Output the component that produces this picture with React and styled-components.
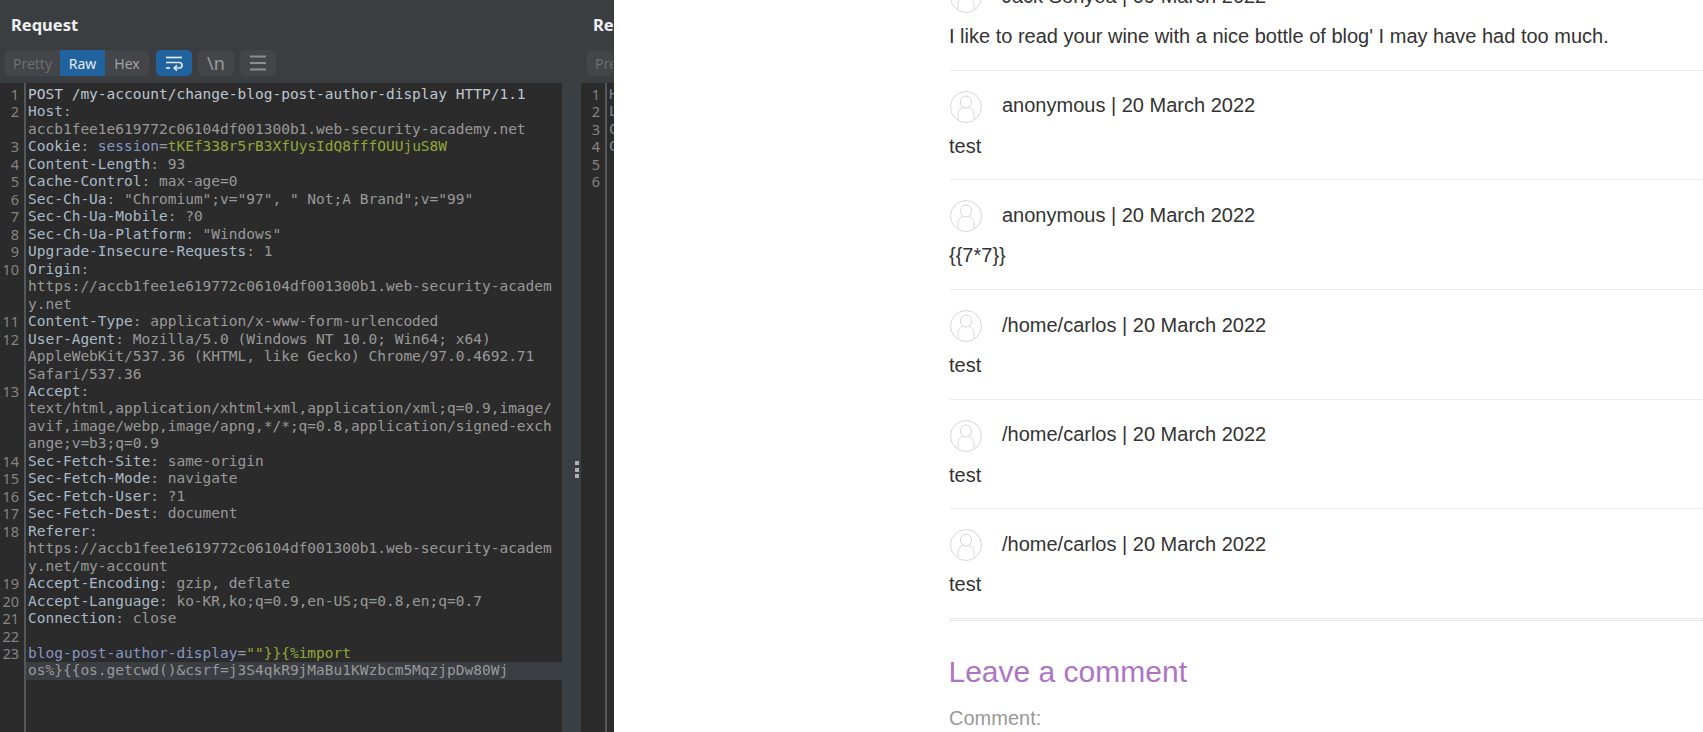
import React from "react";
import styled, { createGlobalStyle } from "styled-components";

const Global = createGlobalStyle`
  html, body {
    margin: 0;
    height: 732px;
    overflow: hidden;
    background: #fff;
  }
`;

const Page = styled.div`
  display: flex;
  width: 1703px;
  height: 732px;
  overflow: hidden;
`;

const Burp = styled.div`
  display: flex;
  flex: 0 0 614px;
  height: 732px;
  overflow: hidden;
  background: #3b3e41;
`;

const Pane = styled.div`
  display: flex;
  flex-direction: column;
  flex: 0 0 ${(p) => p.$width}px;
  min-width: 0;
  overflow: hidden;
`;

const PaneHeader = styled.div`
  height: 83px;
  flex: none;
  box-sizing: border-box;
  padding: 16px 0 0 ${(p) => p.$inset}px;
`;

const PaneTitle = styled.div`
  font: 700 16.5px/18px "Noto Sans", sans-serif;
  color: #eef0f2;
  margin: 0 0 16px ${(p) => p.$inset}px;
  white-space: nowrap;
`;

const Toolbar = styled.div`
  display: flex;
  gap: 6px;
  height: 26px;
`;

const Segments = styled.div`
  display: flex;
  border-radius: 5px;
  overflow: hidden;
  background: #434548;
  margin-right: 1px;
`;

const Segment = styled.div`
  width: ${(p) => p.$width}px;
  flex: none;
  display: flex;
  align-items: center;
  justify-content: center;
  font: 400 14px "Noto Sans", sans-serif;
  color: ${(p) => p.$color};
  background: ${(p) => (p.$active ? "#20639f" : "transparent")};
`;

const ToolButton = styled.div`
  width: 36px;
  height: 26px;
  flex: none;
  border-radius: 5px;
  display: flex;
  align-items: center;
  justify-content: center;
  font: 400 18px "Noto Sans", sans-serif;
  color: #9b9b9b;
  background: ${(p) => (p.$active ? "#20639f" : "#434548")};
`;

const PaneBody = styled.div`
  display: flex;
  flex: 1;
  min-height: 0;
`;

const Code = styled.div`
  flex: 1;
  min-width: 0;
  background: #2b2b2b;
  position: relative;
  box-sizing: border-box;
  padding-top: 3px;
`;

const GutterLine = styled.div`
  position: absolute;
  left: 24px;
  top: 0;
  bottom: 0;
  width: 2px;
  background: #555759;
`;

const Row = styled.div`
  display: flex;
  height: 17.47px;
  background: ${(p) => (p.$current ? "#3a3e42" : "transparent")};
  margin-left: ${(p) => (p.$current ? "26px" : "0")};
`;

const LineNo = styled.div`
  flex: 0 0 19px;
  text-align: right;
  font: 400 14.5px/17.5px "Noto Sans", sans-serif;
  color: #858585;
`;

const LineText = styled.div`
  margin-left: ${(p) => (p.$current ? "2px" : "9px")};
  font: 400 14.5px/17.5px "DejaVu Sans Mono", monospace;
  white-space: pre;
  color: #999;
`;

const Token = styled.span`
  color: ${(p) =>
    ({
      start: "#bfc7cf",
      name: "#aab9c7",
      param: "#8797c2",
      green: "#93a639",
      plain: "#999",
      faint: "#7d8790",
    })[p.$kind]};
`;

const Divider = styled.div`
  flex: 0 0 19px;
  box-sizing: border-box;
  padding: 378px 0 0 13px;
  background: #3a3f43;
`;

const Grip = styled.div`
  width: 4px;
  height: 4px;
  margin-bottom: 2.5px;
  background: #b0b0b0;
`;

const Blog = styled.div`
  flex: 1;
  min-width: 0;
  background: #fff;
  box-sizing: border-box;
  padding-left: 336px;
  font-family: "Liberation Sans", Arial, sans-serif;
  color: #333332;
`;

const CommentList = styled.div`
  margin-top: -39px;
`;

const Comment = styled.section`
  box-sizing: border-box;
  height: ${(p) => (p.$last ? "108.1px" : "109.7px")};
  padding-top: 20px;
  border-bottom: ${(p) => (p.$last ? "none" : "1px solid #e9eced")};
`;

const CommentHead = styled.div`
  display: flex;
  align-items: center;
  gap: 20px;
  height: 32px;
  margin-bottom: 11px;
`;

const Author = styled.div`
  font-size: 20px;
  line-height: 24px;
  margin-top: -3px;
  white-space: nowrap;
`;

const CommentBody = styled.p`
  margin: 0 0 0 -1px;
  font-size: 20px;
  line-height: 24px;
  white-space: nowrap;
`;

const FinalRule = styled.div`
  height: 1px;
  border: 1px solid #e4e4e4;
  background: #fff;
`;

const LeaveTitle = styled.h2`
  margin: 34px 0 0 -1.5px;
  font-size: 30px;
  line-height: 34px;
  font-weight: 400;
  color: #ae74c3;
`;

const FieldLabel = styled.label`
  display: block;
  margin: 17px 0 0 -1px;
  font-size: 20px;
  line-height: 24px;
  color: #999;
`;

const Avatar = () => (
  <svg width="32" height="32" viewBox="0 0 32 32" fill="none" stroke="#d6d8d8" strokeWidth="1">
    <circle cx="16" cy="16" r="15.5" />
    <ellipse cx="16" cy="11" rx="5.6" ry="6" />
    <path d="M8 28.5V23.5C8 19 10.8 17 13.3 16.4M24 28.5V23.5C24 19 21.2 17 18.7 16.4" />
  </svg>
);

const WrapIcon = () => (
  <svg width="18" height="16" viewBox="0 0 18 16" fill="none" stroke="#dfe8f0" strokeWidth="1.7">
    <path d="M1 2.5H17" />
    <path d="M1 7.5H14.5C17.8 7.5 17.8 13 14.5 13H9.5" />
    <path d="M12 10.4L9.2 13L12 15.6" />
    <path d="M1 13H5" />
  </svg>
);

const MenuIcon = () => (
  <svg width="18" height="16" viewBox="0 0 18 16" fill="none" stroke="#8e8e8e" strokeWidth="2">
    <path d="M1 1.5H17M1 8H17M1 14.5H17" />
  </svg>
);

const h = (name, value) => [["name", name], ["plain", ": " + value]];

const requestRows = [
  { n: 1, parts: [["start", "POST /my-account/change-blog-post-author-display HTTP/1.1"]] },
  { n: 2, parts: h("Host", "") },
  { parts: [["plain", "accb1fee1e619772c06104df001300b1.web-security-academy.net"]] },
  { n: 3, parts: [["name", "Cookie"], ["plain", ": "], ["param", "session"], ["plain", "="], ["green", "tKEf338r5rB3XfUysIdQ8fffOUUjuS8W"]] },
  { n: 4, parts: h("Content-Length", "93") },
  { n: 5, parts: h("Cache-Control", "max-age=0") },
  { n: 6, parts: h("Sec-Ch-Ua", '"Chromium";v="97", " Not;A Brand";v="99"') },
  { n: 7, parts: h("Sec-Ch-Ua-Mobile", "?0") },
  { n: 8, parts: h("Sec-Ch-Ua-Platform", '"Windows"') },
  { n: 9, parts: h("Upgrade-Insecure-Requests", "1") },
  { n: 10, parts: h("Origin", "") },
  { parts: [["plain", "https://accb1fee1e619772c06104df001300b1.web-security-academ"]] },
  { parts: [["plain", "y.net"]] },
  { n: 11, parts: h("Content-Type", "application/x-www-form-urlencoded") },
  { n: 12, parts: h("User-Agent", "Mozilla/5.0 (Windows NT 10.0; Win64; x64)") },
  { parts: [["plain", "AppleWebKit/537.36 (KHTML, like Gecko) Chrome/97.0.4692.71"]] },
  { parts: [["plain", "Safari/537.36"]] },
  { n: 13, parts: h("Accept", "") },
  { parts: [["plain", "text/html,application/xhtml+xml,application/xml;q=0.9,image/"]] },
  { parts: [["plain", "avif,image/webp,image/apng,*/*;q=0.8,application/signed-exch"]] },
  { parts: [["plain", "ange;v=b3;q=0.9"]] },
  { n: 14, parts: h("Sec-Fetch-Site", "same-origin") },
  { n: 15, parts: h("Sec-Fetch-Mode", "navigate") },
  { n: 16, parts: h("Sec-Fetch-User", "?1") },
  { n: 17, parts: h("Sec-Fetch-Dest", "document") },
  { n: 18, parts: h("Referer", "") },
  { parts: [["plain", "https://accb1fee1e619772c06104df001300b1.web-security-academ"]] },
  { parts: [["plain", "y.net/my-account"]] },
  { n: 19, parts: h("Accept-Encoding", "gzip, deflate") },
  { n: 20, parts: h("Accept-Language", "ko-KR,ko;q=0.9,en-US;q=0.8,en;q=0.7") },
  { n: 21, parts: h("Connection", "close") },
  { n: 22, parts: [] },
  { n: 23, parts: [["param", "blog-post-author-display"], ["plain", "="], ["green", '""}}{%import']] },
  { current: true, parts: [["plain", "os%}{{os.getcwd()&csrf=j3S4qkR9jMaBu1KWzbcm5MqzjpDw80Wj"]] },
];

const responseRows = [
  { n: 1, parts: [["faint", "H"]] },
  { n: 2, parts: [["faint", "L"]] },
  { n: 3, parts: [["faint", "C"]] },
  { n: 4, parts: [["faint", "C"]] },
  { n: 5, parts: [] },
  { n: 6, parts: [] },
];

const comments = [
  { author: "Jack Sonyea", date: "09 March 2022", text: "I like to read your wine with a nice bottle of blog' I may have had too much." },
  { author: "anonymous", date: "20 March 2022", text: "test" },
  { author: "anonymous", date: "20 March 2022", text: "{{7*7}}" },
  { author: "/home/carlos", date: "20 March 2022", text: "test" },
  { author: "/home/carlos", date: "20 March 2022", text: "test" },
  { author: "/home/carlos", date: "20 March 2022", text: "test" },
];

const CodeRows = ({ rows }) => (
  <Code>
    <GutterLine />
    {rows.map((row, i) => (
      <Row key={i} $current={row.current}>
        {!row.current && <LineNo>{row.n}</LineNo>}
        <LineText $current={row.current}>
          {row.parts.map(([kind, text], j) => (
            <Token key={j} $kind={kind}>
              {text}
            </Token>
          ))}
        </LineText>
      </Row>
    ))}
  </Code>
);

const App = () => {
  return (
    <Page>
      <Global />
      <Burp>
        <Pane $width={581}>
          <PaneHeader $inset={5}>
            <PaneTitle $inset={6}>Request</PaneTitle>
            <Toolbar>
              <Segments>
                <Segment $width={55} $color="#6d6e6f">Pretty</Segment>
                <Segment $width={45} $color="#e4ebf2" $active>Raw</Segment>
                <Segment $width={44} $color="#a3a3a3">Hex</Segment>
              </Segments>
              <ToolButton $active><WrapIcon /></ToolButton>
              <ToolButton>{"\\n"}</ToolButton>
              <ToolButton><MenuIcon /></ToolButton>
            </Toolbar>
          </PaneHeader>
          <PaneBody>
            <CodeRows rows={requestRows} />
            <Divider>
              <Grip />
              <Grip />
              <Grip />
            </Divider>
          </PaneBody>
        </Pane>
        <Pane $width={33}>
          <PaneHeader $inset={6}>
            <PaneTitle $inset={6}>Response</PaneTitle>
            <Toolbar>
              <Segments>
                <Segment $width={55} $color="#6d6e6f">Pretty</Segment>
              </Segments>
            </Toolbar>
          </PaneHeader>
          <PaneBody>
            <CodeRows rows={responseRows} />
          </PaneBody>
        </Pane>
      </Burp>
      <Blog>
        <CommentList>
          {comments.map((c, i) => (
            <Comment key={i} $last={i === comments.length - 1}>
              <CommentHead>
                <Avatar />
                <Author>{c.author} | {c.date}</Author>
              </CommentHead>
              <CommentBody>{c.text}</CommentBody>
            </Comment>
          ))}
        </CommentList>
        <FinalRule />
        <LeaveTitle>Leave a comment</LeaveTitle>
        <FieldLabel>Comment:</FieldLabel>
      </Blog>
    </Page>
  );
};

export default App;
